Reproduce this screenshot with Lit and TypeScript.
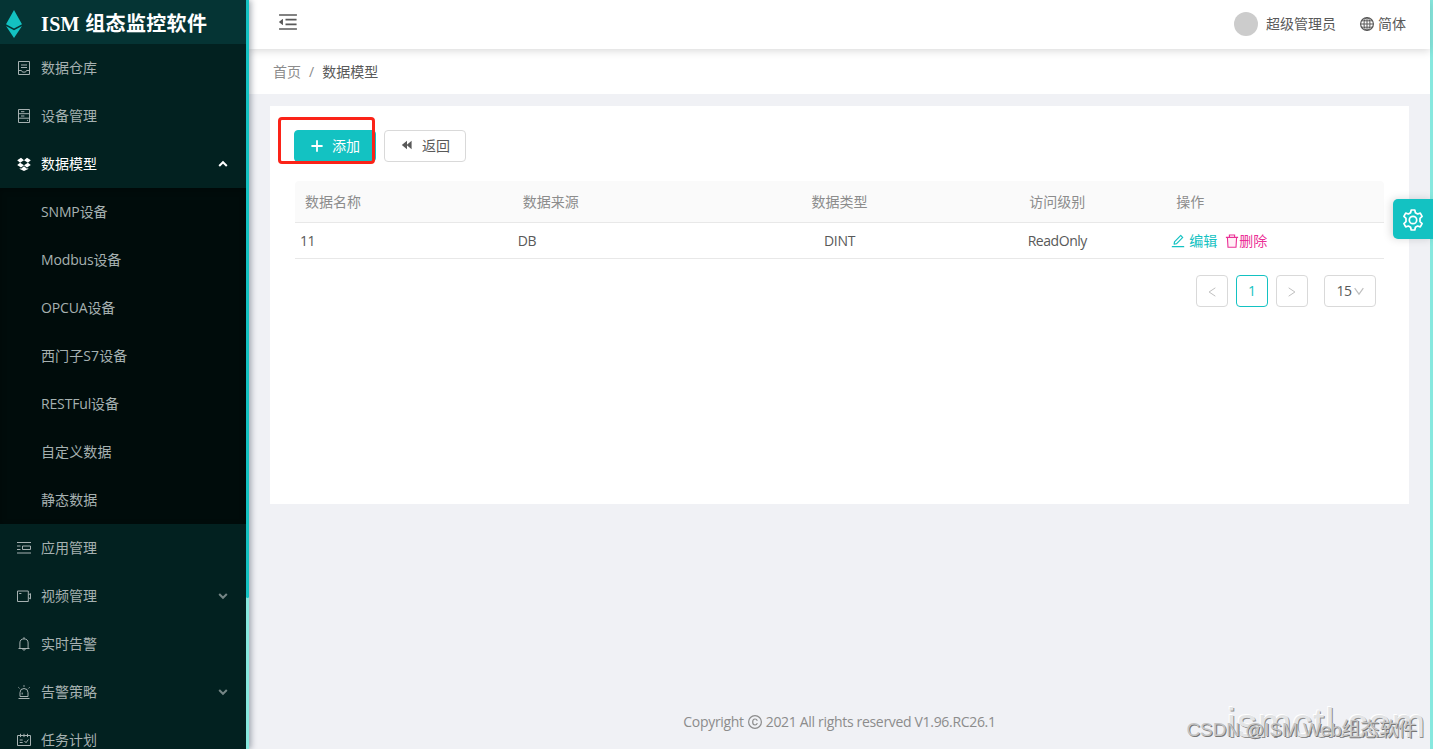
import { LitElement, html, css, svg, nothing } from "lit";
import { customElement, property } from "lit/decorators.js";

const line = (body: unknown) => svg`<g fill="none" stroke="currentColor" stroke-width="1">${body}</g>`;

const ICONS: Record<string, { box: string; body: unknown }> = {
  inbox: {
    box: "0 0 14 14",
    body: line(svg`<path d="M1.5.5h11v13h-11zM4 4h6M4 6.5h6M1.5 9.5h3l1 1.6h3l1-1.6h3"/>`),
  },
  server: {
    box: "0 0 14 14",
    body: line(svg`<path d="M1.5.5h11v13h-11zM1.5 4.7h11M1.5 9.2h11M4 2.7h3.4M4 7h3.4M10 11.4h1"/>`),
  },
  dropbox: {
    box: "0 0 14 14",
    body: svg`<path fill="currentColor" d="M4 .7 7 3.2 3.1 5.7.2 3.3zM10 .7 7 3.2l3.9 2.5 2.9-2.4zM.2 8.1 3.1 5.700 7 8.200l-3 2.400zM13.800 8.100l-2.900-2.400L7 8.200l3 2.400zM7 9.300l3 2.400 1.200-.7v1L7 14l-4.200-2v-1l1.200.7z"/>`,
  },
  list: {
    box: "0 0 14 14",
    body: line(svg`<path d="M0 1.500h14M0 5h3.500M0 8.500h3.500M0 12h14M5.500 5h8v3.500h-8z"/>`),
  },
  video: {
    box: "0 0 14 14",
    body: line(svg`<path d="M.5 2h10.800v10.500H.5zM11.300 6l2.200-1.400v5.300l-2.200-1.400M2.200 4.500h2.200"/>`),
  },
  bell: {
    box: "0 0 14 14",
    body: line(svg`<path d="M1.500 11.500h11M2.900 11.500V6a4.100 4.100 0 0 1 8.200 0v5.500M5.600 12c.2 1.500 2.600 1.500 2.800 0M7 .2V2"/>`),
  },
  alert: {
    box: "0 0 14 14",
    body: line(svg`<path d="M1.500 13.500h11M3 11.500V7.500a4 4 0 0 1 8 0v4zM5.200 9.500V7.600M7 .2v1.600M1.400 2.300l1.100 1.100M12.600 2.300l-1.100 1.100"/>`),
  },
  schedule: {
    box: "0 0 14 14",
    body: line(svg`<path d="M.5 2.500h13v10H.5zM3.500.8v3.300M7 .8v3.300M10.500.8v3.300M2.700 7h3M2.700 9.500h3M7.500 8l1.500 1.700 2.400-3.200"/>`),
  },
  up: { box: "0 0 10 10", body: svg`<path fill="none" stroke="currentColor" stroke-width="2" d="M1.200 7 5 3.200 8.800 7"/>` },
  down: { box: "0 0 10 10", body: svg`<path fill="none" stroke="currentColor" stroke-width="2" opacity=".7" d="M1.200 3 5 6.800 8.800 3"/>` },
  fold: {
    box: "64 64 896 896",
    body: svg`<path fill="currentColor" d="M408 442h480c4.400 0 8-3.600 8-8v-56c0-4.400-3.600-8-8-8H408c-4.400 0-8 3.600-8 8v56c0 4.400 3.600 8 8 8zm-8 204c0 4.400 3.600 8 8 8h480c4.400 0 8-3.600 8-8v-56c0-4.400-3.600-8-8-8H408c-4.400 0-8 3.600-8 8v56zm504-486H120c-4.400 0-8 3.600-8 8v56c0 4.400 3.600 8 8 8h784c4.400 0 8-3.600 8-8v-56c0-4.400-3.600-8-8-8zm0 632H120c-4.400 0-8 3.600-8 8v56c0 4.400 3.600 8 8 8h784c4.400 0 8-3.600 8-8v-56c0-4.400-3.600-8-8-8zM115.400 518.900L271.700 642c5.800 4.600 14.400.5 14.400-6.900V388.900c0-7.400-8.500-11.500-14.400-6.900L115.400 505.100a8.740 8.740 0 000 13.800z"/>`,
  },
  globe: {
    box: "0 0 14 14",
    body: line(svg`<circle cx="7" cy="7" r="6.400" stroke-width="1.200"/><ellipse cx="7" cy="7" rx="3" ry="6.400"/><path d="M7 .6v12.800M.6 7h12.800M1.600 3.800h10.800M1.600 10.200h10.800"/>`),
  },
  plus: { box: "0 0 14 14", body: svg`<path fill="none" stroke="currentColor" stroke-width="1.800" d="M7 1.200v11.600M1.400 7h11.200"/>` },
  back: { box: "0 0 14 14", body: svg`<path fill="currentColor" d="M7 2.700v8.600L1.800 7zM11.600 2.700v8.600L6.600 7z"/>` },
  edit: {
    box: "64 64 896 896",
    body: svg`<path fill="currentColor" d="M257.700 752c2 0 4-.2 6-.5L431.900 722c2-.4 3.900-1.300 5.300-2.800l423.900-423.900a9.960 9.960 0 000-14.100L694.900 114.900c-1.900-1.900-4.400-2.900-7.100-2.900s-5.200 1-7.100 2.900L256.800 538.800c-1.500 1.500-2.400 3.300-2.800 5.300l-29.500 168.200a33.500 33.500 0 009.400 29.800c6.600 6.400 14.900 9.900 23.800 9.900zm67.400-174.400L687.800 215l73.300 73.300-362.700 362.600-88.900 15.700 15.600-89zM880 836H144c-17.700 0-32 14.300-32 32v36c0 4.400 3.600 8 8 8h784c4.400 0 8-3.600 8-8v-36c0-17.700-14.300-32-32-32z"/>`,
  },
  trash: {
    box: "0 0 14 14",
    body: svg`<path d="M2.500 3.700h9l-.6 9.300H3.100z" fill="#fff0f6"/><g fill="none" stroke="currentColor" stroke-width="1.100"><path d="M.9 3.400h12.200M2.400 3.400l.6 9.800h8l.6-9.800M4.400 3.400V1h5.200v2.400"/></g>`,
  },
  left: { box: "0 0 12 12", body: line(svg`<path stroke-width="1.200" d="M10 1 2.500 6l7.500 5"/>`) },
  right: { box: "0 0 12 12", body: line(svg`<path stroke-width="1.200" d="M2 1l7.500 5L2 11"/>`) },
  caret: { box: "0 0 12 12", body: line(svg`<path stroke-width="1.400" d="M.8 2 6 9.200 11.200 2"/>`) },
  copyright: {
    box: "0 0 14 14",
    body: line(svg`<circle cx="7" cy="7" r="6.400" stroke-width="1.200"/><path stroke-width="1.200" d="M9.300 5.700C8.800 4.300 7.900 4 7 4 5.500 4 4.700 5.200 4.700 7s.8 3 2.300 3c1 0 1.900-.4 2.300-1.800"/>`),
  },
  gear: {
    box: "0 0 22 22",
    body: svg`<g fill="none" stroke="currentColor" stroke-width="1.700" stroke-linejoin="round"><path d="M9.200 1h3.600l.6 2.700 2.200 1.300 2.700-.9 1.800 3.200L18 9.300v3.400l2.100 2-1.800 3.200-2.700-.9-2.200 1.300-.6 2.700H9.200l-.6-2.700L6.400 17l-2.700.9-1.800-3.200 2.100-2V9.300l-2.100-2 1.800-3.200 2.700.9 2.200-1.300z"/><circle cx="11" cy="11" r="3.700"/></g>`,
  },
  logo: {
    box: "0 0 16 28",
    body: svg`<path fill="#13c2c2" d="M8 0l8 14.200L8 18.500 0 14.200zM0 16l8 4.300L16 16 8 28z"/>`,
  },
};

@customElement("ui-icon")
class UiIcon extends LitElement {
  @property() name = "";
  static styles = css`
    :host { display: inline-flex; flex: none; width: 14px; height: 14px; }
    .glyph { display: block; width: 100%; height: 100%; overflow: visible; }
  `;
  render() {
    const icon = ICONS[this.name];
    return icon ? html`<svg class="glyph" viewBox=${icon.box}>${icon.body}</svg>` : nothing;
  }
}

interface Entry { label: string; icon: string; arrow?: "up" | "down"; children?: string[] }

const MENU: Entry[] = [
  { label: "数据仓库", icon: "inbox" },
  { label: "设备管理", icon: "server" },
  {
    label: "数据模型", icon: "dropbox", arrow: "up",
    children: ["SNMP设备", "Modbus设备", "OPCUA设备", "西门子S7设备", "RESTFul设备", "自定义数据", "静态数据"],
  },
  { label: "应用管理", icon: "list" },
  { label: "视频管理", icon: "video", arrow: "down" },
  { label: "实时告警", icon: "bell" },
  { label: "告警策略", icon: "alert", arrow: "down" },
  { label: "任务计划", icon: "schedule" },
];

@customElement("side-menu")
class SideMenu extends LitElement {
  static styles = css`
    :host { display: flex; width: 249px; height: 100%; flex: none; overflow: hidden; position: relative; z-index: 3; box-shadow: 2px 0 6px rgba(0, 21, 41, 0.35); }
    .panel { width: 246px; background: #022120; color: #a6b1b1; overflow: hidden; }
    .brand { height: 44px; display: flex; align-items: center; background: #053434; padding-left: 6px; box-sizing: border-box; }
    .mark { width: 16px; height: 28px; margin-top: 4px; }
    .title { margin: 4px 0 0 19px; color: #fff; font: bold 20px/40px "Liberation Serif", "Noto Sans CJK SC", serif; white-space: nowrap; letter-spacing: 0.35px; }
    .item { height: 48px; display: flex; align-items: center; padding: 0 18px 0 17px; }
    .item.open { color: #fff; }
    .label { margin-left: 10px; flex: 1; }
    .arrow { width: 10px; height: 10px; }
    .sub { background: #000c0b; box-shadow: inset 0 2px 6px rgba(0, 0, 0, 0.3); }
    .child { height: 48px; line-height: 48px; padding-left: 41px; letter-spacing: -0.15px; }
    .child.han { letter-spacing: 0.1px; }
    .track { width: 3px; background: #87e8de; }
    .thumb { height: 598px; background: #13c2c2; border-radius: 0 0 2px 2px; }
  `;
  render() {
    return html`
      <div class="panel">
        <div class="brand"><ui-icon class="mark" name="logo"></ui-icon><h1 class="title">ISM 组态监控软件</h1></div>
        ${MENU.map((m) => html`
          <div class="item ${m.children ? "open" : ""}">
            <ui-icon name=${m.icon}></ui-icon><span class="label">${m.label}</span>
            ${m.arrow ? html`<ui-icon class="arrow" name=${m.arrow}></ui-icon>` : nothing}
          </div>
          ${m.children ? html`<div class="sub">${m.children.map((c) => html`<div class="child ${/^[A-Z]/.test(c) ? "" : "han"}">${c}</div>`)}</div>` : nothing}
        `)}
      </div>
      <div class="track"><div class="thumb"></div></div>
    `;
  }
}

@customElement("data-table")
class DataTable extends LitElement {
  static styles = css`
    :host { display: block; }
    .row { display: grid; grid-template-columns: repeat(5, 1fr); align-items: center; border-bottom: 1px solid #e8e8e8; box-sizing: border-box; height: 36px; }
    .head { height: 42px; background: #fafafa; color: #8c8c8c; border-radius: 4px 4px 0 0; }
    .cell { padding: 0 5px; letter-spacing: -0.45px; display: flex; align-items: center; }
    .head .cell { padding: 0 10px; letter-spacing: 0; }
    .mid { justify-content: center; }
    .kind { letter-spacing: -0.3px; }
    .edit { color: #13c2c2; display: flex; align-items: center; gap: 4px; letter-spacing: 0; }
    .del { color: #eb2f96; display: flex; align-items: center; margin-left: 8px; letter-spacing: 0; }
    .pager { display: flex; justify-content: flex-end; gap: 8px; padding: 16px 8px 0; }
    .page { width: 32px; height: 32px; box-sizing: border-box; border: 1px solid #d9d9d9; border-radius: 4px; display: flex; align-items: center; justify-content: center; color: #bfbfbf; }
    .page.on { border-color: #13c2c2; color: #13c2c2; }
    .size { width: 52px; margin-left: 8px; color: #595959; letter-spacing: -0.4px; }
    .chev { width: 10px; height: 11px; color: #bfbfbf; margin-left: 2px; }
    .nav { width: 10px; height: 12px; margin-top: 2px; }
  `;
  render() {
    return html`
      <div class="row head">
        <div class="cell">数据名称</div><div class="cell">数据来源</div><div class="cell mid">数据类型</div>
        <div class="cell mid">访问级别</div><div class="cell">操作</div>
      </div>
      <div class="row">
        <div class="cell">11</div><div class="cell">DB</div><div class="cell mid kind">DINT</div><div class="cell mid">ReadOnly</div>
        <div class="cell">
          <span class="edit"><ui-icon name="edit"></ui-icon>编辑</span>
          <span class="del"><ui-icon name="trash"></ui-icon>删除</span>
        </div>
      </div>
      <div class="pager">
        <div class="page"><ui-icon class="nav" name="left"></ui-icon></div>
        <div class="page on">1</div>
        <div class="page"><ui-icon class="nav" name="right"></ui-icon></div>
        <div class="page size">15<ui-icon class="chev" name="caret"></ui-icon></div>
      </div>
    `;
  }
}

@customElement("app-root")
class AppRoot extends LitElement {
  static styles = css`
    :host { display: flex; position: relative; width: 100%; height: 100vh; overflow: hidden; background: #f0f2f5; color: #595959; font: 14px/22px "Open Sans", "Noto Sans CJK SC", sans-serif; }
    .main { flex: 1; min-width: 0; display: flex; flex-direction: column; background: #f0f1f5; }
    .top { height: 49px; flex: none; box-sizing: border-box; background: #fff; display: flex; align-items: center; padding: 0 24px 1px 29px; box-shadow: 0 2px 8px rgba(0, 0, 0, 0.15); z-index: 1; }
    .fold { width: 20px; height: 20px; margin-top: -4px; }
    .avatar { width: 24px; height: 24px; border-radius: 50%; background: #ccc; margin: 0 8px 0 auto; }
    .lang { display: flex; align-items: center; gap: 4px; margin-left: 24px; }
    .crumbs { height: 45px; flex: none; background: #fff; padding-left: 24px; display: flex; align-items: center; color: #8c8c8c; box-sizing: border-box; }
    .sep { margin: 0 8px; }
    .here { color: #595959; }
    .card { height: 398px; flex: none; box-sizing: border-box; margin: 12px 21px 0; padding: 24px 25px 0 24px; background: #fff; }
    .tools { display: flex; gap: 8px; margin-bottom: 19px; }
    .btn { height: 32px; width: 82px; box-sizing: border-box; border: 1px solid #d9d9d9; border-radius: 4px; display: flex; align-items: center; justify-content: center; gap: 8px; }
    .btn.add { background: #13c2c2; border-color: #13c2c2; color: #fff; }
    .rew { width: 14px; height: 14px; margin-top: -2px; }
    .table { margin-left: 1px; }
    .foot { margin: auto 0 16px; display: flex; justify-content: center; align-items: center; gap: 4px; color: #8c8c8c; letter-spacing: -0.32px; }
    .track { width: 3px; flex: none; background: #87e8de; }
    .ring { position: absolute; left: 278px; top: 117px; width: 97px; height: 47px; box-sizing: border-box; border: 3px solid #fb2318; border-radius: 4px; }
    .settings { position: absolute; right: 0; top: 199px; width: 40px; height: 40px; background: #13c2c2; color: #fff; border-radius: 5px 0 0 5px; display: flex; align-items: center; justify-content: center; box-shadow: -2px 0 8px rgba(0, 0, 0, 0.15); z-index: 2; }
    .cog { width: 22px; height: 22px; margin-top: 2px; }
    .stamp, .credit { position: absolute; white-space: nowrap; font-family: "Liberation Sans", "Noto Sans CJK SC", sans-serif; }
    .stamp { right: 7px; top: 700px; font-size: 40px; line-height: 46px; letter-spacing: 1px; color: #e3e4e5; text-shadow: -1px -1px 0 #fff, 1px 1px 0 #8c8c8c; }
    .credit { right: 16px; top: 718px; font-size: 19px; line-height: 24px; letter-spacing: -0.1px; color: #c4c4c4; text-shadow: 1px 1px 0 #777; }
  `;
  render() {
    return html`
      <side-menu></side-menu>
      <div class="main">
        <header class="top">
          <ui-icon class="fold" name="fold"></ui-icon>
          <span class="avatar"></span><span>超级管理员</span>
          <span class="lang"><ui-icon name="globe"></ui-icon>简体</span>
        </header>
        <nav class="crumbs"><span>首页</span><span class="sep">/</span><span class="here">数据模型</span></nav>
        <section class="card">
          <div class="tools">
            <div class="btn add"><ui-icon name="plus"></ui-icon>添加</div>
            <div class="btn"><ui-icon class="rew" name="back"></ui-icon>返回</div>
          </div>
          <data-table class="table"></data-table>
        </section>
        <footer class="foot"><span>Copyright</span><ui-icon name="copyright"></ui-icon><span>2021 All rights reserved V1.96.RC26.1</span></footer>
      </div>
      <div class="track"></div>
      <div class="ring"></div>
      <div class="settings"><ui-icon class="cog" name="gear"></ui-icon></div>
      <div class="stamp">ismctl.com</div>
      <div class="credit">CSDN @ISM Web组态软件</div>
    `;
  }
}
